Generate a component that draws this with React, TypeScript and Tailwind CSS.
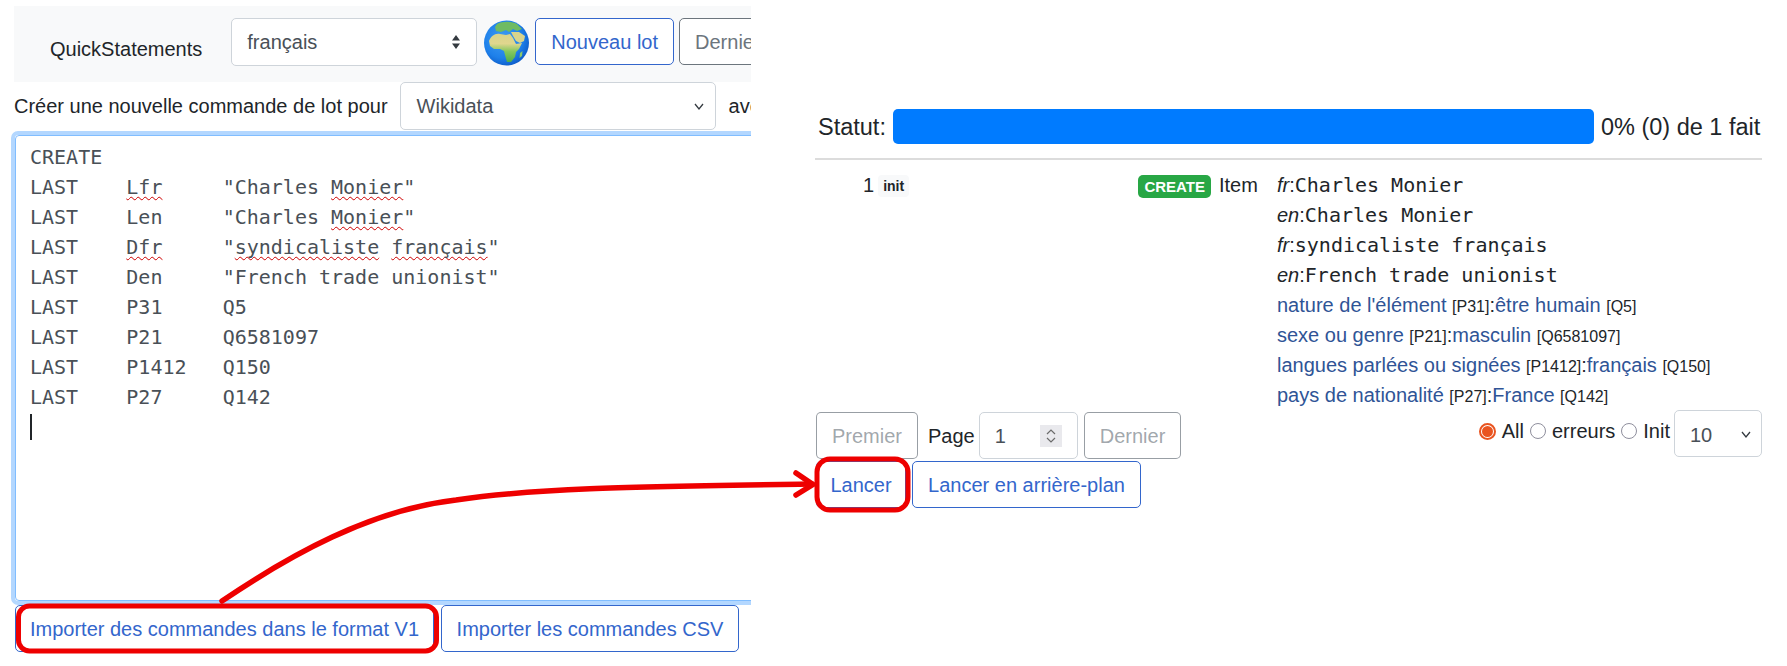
import React from 'react';

const sans = "font-['Liberation_Sans',Arial,sans-serif]";
const mono = "font-['DejaVu_Sans_Mono',monospace]";

const btnBlue = 'h-[47px] rounded-[5px] border border-[#36c] bg-white px-[15px] text-[20px] leading-[30px] text-[#36c] whitespace-nowrap';
const btnGray = 'h-[47px] rounded-[5px] border border-[#6c757d] bg-white px-[15px] text-[20px] leading-[30px] text-[#6c757d] whitespace-nowrap';
const btnOff = 'h-[47px] rounded-[5px] border border-[#6c757d]/70 bg-white px-[15px] text-[20px] leading-[30px] text-[#6c757d]/65 whitespace-nowrap';

const Squiggle: React.FC<{ children: React.ReactNode }> = ({ children }) => (
  <span className="underline decoration-wavy decoration-[#cc0000] decoration-[1px] underline-offset-[2px] [text-decoration-skip-ink:none]">{children}</span>
);

const Globe = () => (
  <svg width="45" height="46" viewBox="0 0 45 46" className="shrink-0">
    <defs>
      <radialGradient id="sea" cx="42%" cy="40%" r="62%">
        <stop offset="0%" stopColor="#3f9df2" />
        <stop offset="70%" stopColor="#1e80ea" />
        <stop offset="100%" stopColor="#0f5fcb" />
      </radialGradient>
      <linearGradient id="land" x1="0" y1="0" x2="0" y2="1">
        <stop offset="0%" stopColor="#d8d48a" />
        <stop offset="35%" stopColor="#e0d68e" />
        <stop offset="62%" stopColor="#86c85e" />
        <stop offset="100%" stopColor="#4fae4c" />
      </linearGradient>
    </defs>
    <circle cx="22.5" cy="23" r="22.5" fill="url(#sea)" />
    <path d="M13 4 C18 1 27 1 33 4 L38 9 L33 11 L29 9 L25 12 L22 10 L17 12 L12 11 L11 7 Z" fill="#6fbb62" />
    <path d="M5 21 C7 16 11 13 16 14 L22 15 L26 14 L29 18 L32 24 L38 23 L35 29 L32 32 L31 37 L27 42 L23 42 L21 35 L20 31 L16 29 L10 29 L6 26 Z" fill="url(#land)" />
    <path d="M27 12 L35 12 L41 16 L40 21 L36 23 L32 21 L29 16 Z" fill="#d9d48c" />
    <path d="M36 33 L38.5 31 L38 36 L35.5 38 Z" fill="#8cc96a" />
  </svg>
);

const commandLines = [
  <>CREATE</>,
  <>LAST    <Squiggle>Lfr</Squiggle>     "Charles <Squiggle>Monier</Squiggle>"</>,
  <>LAST    Len     "Charles <Squiggle>Monier</Squiggle>"</>,
  <>LAST    <Squiggle>Dfr</Squiggle>     "<Squiggle>syndicaliste</Squiggle> <Squiggle>français</Squiggle>"</>,
  <>LAST    Den     "French trade unionist"</>,
  <>LAST    P31     Q5</>,
  <>LAST    P21     Q6581097</>,
  <>LAST    P1412   Q150</>,
  <>LAST    P27     Q142</>,
];

const labels = [
  ['fr', 'Charles Monier'],
  ['en', 'Charles Monier'],
  ['fr', 'syndicaliste français'],
  ['en', 'French trade unionist'],
];

const claims = [
  ['nature de l\'élément', 'P31', 'être humain', 'Q5'],
  ['sexe ou genre', 'P21', 'masculin', 'Q6581097'],
  ['langues parlées ou signées', 'P1412', 'français', 'Q150'],
  ['pays de nationalité', 'P27', 'France', 'Q142'],
];

const Radio: React.FC<{ checked?: boolean; label: string }> = ({ checked, label }) => (
  <span className="flex items-center gap-[6px]">
    {checked ? (
      <span className="flex size-[17px] items-center justify-center rounded-full border-2 border-[#e95420]">
        <span className="size-[11px] rounded-full bg-[#e95420]" />
      </span>
    ) : (
      <span className="size-[16px] rounded-full border border-[#8f8f9d]" />
    )}
    {label}
  </span>
);

export default function App() {
  return (
    <div className={`relative flex h-[666px] w-[1787px] overflow-hidden bg-white text-[20px] leading-[30px] text-[#212529] ${sans}`}>
      {/* left screenshot */}
      <div className="w-[751px] shrink-0 overflow-hidden pt-[6px]">
        <div className="ml-[14px] flex h-[76px] items-start bg-[#f8f9fa] pl-[36px] pt-[12px]">
          <span className="mr-[29px] mt-[16px] shrink-0 leading-[30px]">QuickStatements</span>
          <div className="relative h-[48px] w-[246px] shrink-0 rounded-[5px] border border-[#ced4da] bg-white pl-[15px] leading-[46px] text-[#495057]">
            français
            <svg width="10" height="16" viewBox="0 0 10 16" className="absolute right-[15px] top-[15px]">
              <path d="M5 1 L9 6.5 H1 Z M5 15 L1 9.5 H9 Z" fill="#343a40" />
            </svg>
          </div>
          <div className="ml-[7px] mr-[6px] mt-[2px] flex"><Globe /></div>
          <button className={`${btnBlue} mr-[5px] shrink-0`}>Nouveau lot</button>
          <button className={`${btnGray} shrink-0`}>Derniers lots</button>
        </div>

        <div className="ml-[14px] flex h-[48px] items-center whitespace-nowrap">
          <span className="mr-[12px]">Créer une nouvelle commande de lot pour</span>
          <div className="relative h-[48px] w-[316px] shrink-0 rounded-[5px] border border-[#ced4da] bg-white pl-[16px] leading-[46px] text-[#495057]">
            Wikidata
            <svg width="12" height="10" viewBox="0 0 12 10" className="absolute right-[10px] top-[19px]">
              <path d="M2 2 L6 7 L10 2" fill="none" stroke="#343a40" strokeWidth="1.3" />
            </svg>
          </div>
          <span className="ml-[13px]">avec</span>
        </div>

        <div className="ml-[11px] mt-[1px] h-[474px] w-[760px] rounded-[7px] border-[4px] border-[#b3d7ff]">
          <div className={`h-full w-full whitespace-pre rounded-[4px] border border-[#80bdff] pl-[14px] pt-[6px] text-[20px] leading-[30px] text-[#495057] ${mono}`}>
            {commandLines.map((line, i) => (
              <div key={i} className="h-[30px]">{line}</div>
            ))}
            <div className="mt-[2px] h-[26px] w-[1.5px] bg-[#212529]" />
          </div>
        </div>

        <div className="ml-[15px] flex gap-[7px]">
          <button className={`${btnBlue} w-[419px] !px-0`}>Importer des commandes dans le format V1</button>
          <button className={`${btnBlue} w-[298px] !px-0`}>Importer les commandes CSV</button>
        </div>
      </div>

      {/* right screenshot */}
      <div className="ml-[64px] w-[947px] shrink-0 pt-[109px]">
        <div className="flex h-[35px] items-center pl-[3px] text-[23.5px]">
          <span>Statut:</span>
          <div className="ml-[7px] h-[35px] w-[701px] shrink-0 rounded-[5px] bg-[#007bff]" />
          <span className="ml-[7px] whitespace-nowrap">0% (0) de 1 fait</span>
        </div>
        <div className="mt-[14px] h-[2px] bg-[#dcdcdc]" />

        <div className="mt-[10px] flex h-[240px]">
          <div className="flex w-[396px] shrink-0 items-start">
            <span className="ml-[48px]">1</span>
            <span className="ml-[4px] mt-[5px] rounded-[4px] bg-[#f8f9fa] px-[5px] text-[14px] font-bold leading-[22px]">init</span>
            <span className="ml-auto mt-[5px] rounded-[5px] bg-[#28a745] px-[6px] text-[15px] font-bold leading-[23px] text-white">CREATE</span>
          </div>
          <span className="w-[66px] shrink-0 pl-[8px]">Item</span>
          <div>
            {labels.map(([lang, text], i) => (
              <div key={i} className="h-[30px] whitespace-nowrap"><i>{lang}</i>:<span className={mono}>{text}</span></div>
            ))}
            {claims.map(([prop, pid, value, qid]) => (
              <div key={pid} className="h-[30px] whitespace-nowrap">
                <span className="text-[#2f5496]">{prop}</span> <span className="text-[16px]">[{pid}]</span>:<span className="text-[#2f5496]">{value}</span> <span className="text-[16px]">[{qid}]</span>
              </div>
            ))}
          </div>
        </div>

        <div className="flex items-start justify-between">
          <div className="mt-[2px] flex items-center pl-[1px]">
            <button className={btnOff}>Premier</button>
            <span className="ml-[10px] mr-[4px]">Page</span>
            <div className="flex h-[47px] w-[99px] items-center justify-between rounded-[5px] border border-[#ced4da] pl-[15px] pr-[15px] text-[#495057]">
              1
              <svg width="22" height="22" viewBox="0 0 22 22" className="bg-[#e9e9ed]">
                <path d="M7 9 L11 5 L15 9 M7 13 L11 17 L15 13" fill="none" stroke="#6b6b6b" strokeWidth="1.2" />
              </svg>
            </div>
            <button className={`${btnOff} ml-[6px]`}>Dernier</button>
          </div>
          <div className="flex items-start">
            <div className="mr-[4px] mt-[6px] flex gap-[6px]">
              <Radio checked label="All" />
              <Radio label="erreurs" />
              <Radio label="Init" />
            </div>
            <div className="relative h-[47px] w-[88px] rounded-[5px] border border-[#ced4da] pl-[15px] leading-[48px] text-[#495057]">
              10
              <svg width="12" height="10" viewBox="0 0 12 10" className="absolute right-[9px] top-[19px]">
                <path d="M2 2 L6 7 L10 2" fill="none" stroke="#343a40" strokeWidth="1.3" />
              </svg>
            </div>
          </div>
        </div>

        <div className="mt-[2px] flex gap-[6px] pl-[1px]">
          <button className={`${btnBlue} w-[90px] !px-0`}>Lancer</button>
          <button className={`${btnBlue} w-[229px] !px-0`}>Lancer en arrière-plan</button>
        </div>
      </div>

      {/* red annotations drawn over the screenshots */}
      <svg width="1787" height="666" viewBox="0 0 1787 666" className="pointer-events-none absolute left-0 top-0" fill="none" stroke="#ee0000" strokeLinecap="round" strokeLinejoin="round">
        <rect x="18.5" y="606" width="418" height="45" rx="11" strokeWidth="5" />
        <rect x="817" y="459" width="91" height="51" rx="13" strokeWidth="5" />
        <path d="M222 601 C290 555 370 510 456 500 C540 488 620 487 812 484" strokeWidth="5.5" />
        <path d="M796 473 L813 484.5 L796 495" strokeWidth="5.5" />
      </svg>
    </div>
  );
}
